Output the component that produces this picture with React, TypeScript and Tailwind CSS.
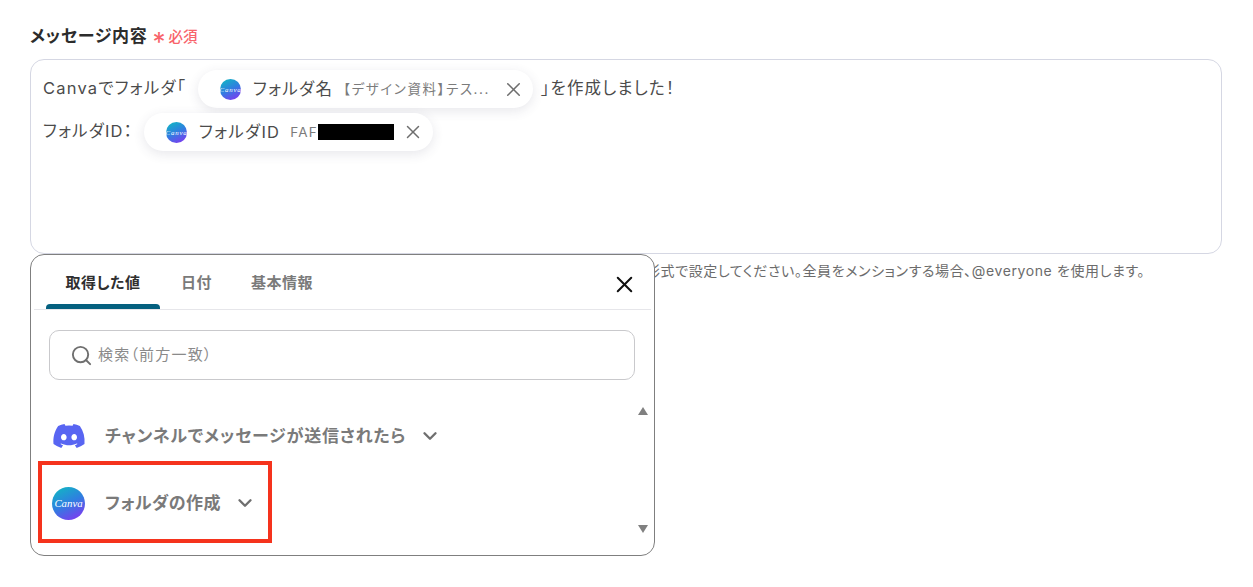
import { useId } from "react";
import { FaDiscord } from "react-icons/fa";
import { ChevronDown, Search, X } from "lucide-react";

function CanvaLogo({ size }: { size: number }) {
  const id = useId();
  return (
    <svg width={size} height={size} viewBox="0 0 32 32" className="shrink-0">
      <defs>
        <linearGradient id={id} x1="0.2" y1="0" x2="0.7" y2="1">
          <stop offset="0" stopColor="#12b5c4" />
          <stop offset="0.5" stopColor="#2f7fe0" />
          <stop offset="1" stopColor="#7a3df0" />
        </linearGradient>
      </defs>
      <circle cx="16" cy="16" r="16" fill={`url(#${id})`} />
      <text x="16" y="19.5" textAnchor="middle" fontSize="10.5" fontStyle="italic" fill="#fff" fontFamily="'Liberation Serif', serif">
        Canva
      </text>
    </svg>
  );
}

function Chip({ name, value, className, children }: { name: string; value?: string; className: string; children?: React.ReactNode }) {
  return (
    <span className={`inline-flex items-center h-[38px] rounded-full bg-white shadow-[0_3px_12px_rgba(60,60,90,0.12)] ${className}`}>
      <CanvaLogo size={21} />
      <span className="ml-[12px] text-[16.5px] tracking-[1.3px] text-[#4b4b4b] whitespace-nowrap">{name}</span>
      {value && <span className="ml-[10px] text-[13.5px] tracking-[1.6px] text-[#7b7b7b] whitespace-nowrap">{value}</span>}
      {children}
    </span>
  );
}

export default function App() {
  return (
    <div className="relative w-[1253px] h-[587px] bg-white overflow-hidden font-['Inter','Noto_Sans_CJK_JP',sans-serif] text-[#3c3c3c] [font-feature-settings:'palt']">
      <div className="pl-[30px] pr-[31px] pt-[26px]">
        <div className="flex items-center h-[22px]">
          <span className="text-[17px] tracking-[0.7px] font-semibold text-[#2c2c2c]">メッセージ内容</span>
          <span className="ml-[5px] text-[26px] leading-none text-[#f8636b] mt-[9px]">*</span>
          <span className="ml-[3px] text-[14.5px] font-medium text-[#f8636b]">必須</span>
        </div>
        <div className="mt-[11px] h-[195px] rounded-[14px] border border-[#d5d7e3] pl-[12px] pt-[10px] text-[16.5px] tracking-[1.2px] text-[#4b4b4b]">
          <div className="flex items-center h-[38px]">
            <span className="whitespace-nowrap -mt-[2px] w-[146px]">Canvaでフォルダ「</span>
            <Chip name="フォルダ名" value="【デザイン資料】テス..." className="ml-[9px] w-[335px] pl-[22px]">
              <X size={23} strokeWidth={1.6} className="ml-[12px] text-[#6e6e6e]" />
            </Chip>
            <span className="whitespace-nowrap ml-[8px] -mt-[2px]">」を作成しました！</span>
          </div>
          <div className="flex items-center h-[38px] mt-[5px]">
            <span className="whitespace-nowrap -mt-[2px] w-[92px]">フォルダID：</span>
            <Chip name="フォルダID" className="ml-[9px] w-[289px] pl-[22px]">
              <span className="ml-[10px] text-[13.5px] tracking-[1.2px] text-[#7b7b7b]">FAF</span>
              <span className="w-[76px] h-[16px] bg-black" />
              <X size={22} strokeWidth={1.6} className="ml-[8px] text-[#6e6e6e]" />
            </Chip>
          </div>
        </div>
        <p className="mt-[6px] pr-[77px] text-right text-[14px] tracking-[0.6px] text-[#6b6b6b] whitespace-nowrap">
          メンションは&lt;@ユーザーID&gt;形式で設定してください。全員をメンションする場合、@everyone を使用します。
        </p>
      </div>

      <div className="absolute left-[30px] top-[254px] w-[625px] h-[302px] rounded-[14px] border border-[#7f7f7f] bg-white">
        <div className="flex items-stretch h-[55px] mx-[3px] border-b border-[#e6e6ea] relative">
          <div className="relative w-[114px] ml-[12px] pt-[2px] flex items-center justify-center text-[15px] tracking-[0.5px] font-semibold text-[#2f2f2f]">
            取得した値
            <span className="absolute left-0 right-0 bottom-0 h-[5px] rounded-t-[4px] bg-[#04607f]" />
          </div>
          <div className="ml-[21px] pt-[2px] flex items-center text-[15px] tracking-[0.5px] font-semibold text-[#7a7a7a]">日付</div>
          <div className="ml-[39px] pt-[2px] flex items-center text-[15px] tracking-[0.5px] font-semibold text-[#7a7a7a]">基本情報</div>
          <X size={27} strokeWidth={1.8} className="absolute left-[577px] top-[16px] text-[#111]" />
        </div>
        <div className="mt-[20px] ml-[18px] w-[586px] h-[50px] rounded-[10px] border border-[#c9c9cc] flex items-center pl-[20px]">
          <Search size={23} strokeWidth={2} className="text-[#6f6f6f]" />
          <span className="ml-[5px] text-[15px] tracking-[1.2px] text-[#8a8a8a]">検索（前方一致）</span>
        </div>
        <div className="relative mt-[26px] pl-[21px]">
          <div className="flex items-center h-[60px]">
            <FaDiscord size={34} className="text-[#5865f2] shrink-0" />
            <span className="ml-[19px] pt-[2px] text-[17px] tracking-[0.8px] font-semibold text-[#7a7a7a] whitespace-nowrap">チャンネルでメッセージが送信されたら</span>
            <ChevronDown size={22} strokeWidth={2.6} className="ml-[13px] text-[#6f6f6f]" />
          </div>
          <div className="flex items-center h-[66px] mt-[4px]">
            <CanvaLogo size={33} />
            <span className="ml-[20px] pt-[2px] text-[17px] tracking-[0.4px] font-semibold text-[#7a7a7a] whitespace-nowrap">フォルダの作成</span>
            <ChevronDown size={22} strokeWidth={2.6} className="ml-[13px] text-[#6f6f6f]" />
          </div>
        </div>
        <div className="absolute right-[5px] top-[152px] h-[126px] w-[12px] flex flex-col justify-between items-center">
          <span className="w-0 h-0 border-x-[5px] border-x-transparent border-b-[8px] border-b-[#808080]" />
          <span className="w-0 h-0 border-x-[5px] border-x-transparent border-t-[8px] border-t-[#808080]" />
        </div>
      </div>

      <div className="absolute left-[38px] top-[461px] w-[234px] h-[82px] border-[4px] border-[#f5331d]" />
    </div>
  );
}
